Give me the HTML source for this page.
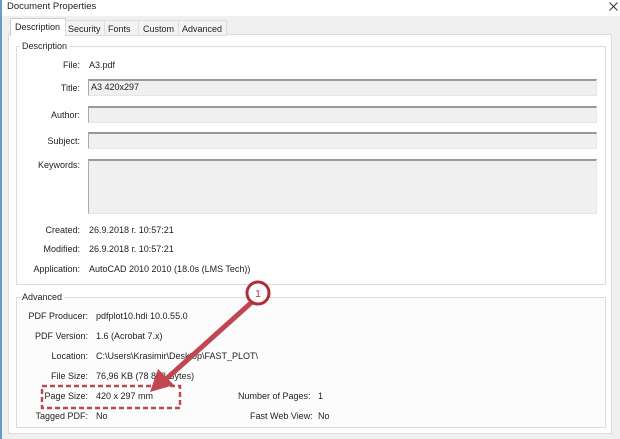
<!DOCTYPE html><html><head><style>
body{margin:0;width:620px;height:439px;background:#f0f0f0;font-family:"Liberation Sans",sans-serif;font-size:9px;color:#222;position:relative;overflow:hidden}
.a{position:absolute;white-space:nowrap}
.r{text-align:right;width:70px}
.box{position:absolute;background:#f0f0f0;border-top:2px solid #999;border-left:1px solid #aaa;border-right:1px solid #e6e6e6;border-bottom:1px solid #e6e6e6;box-sizing:border-box}
</style></head><body>
<div class="a" style="left:0;top:0;width:620px;height:16px;background:#fff"></div>
<div class="a" style="left:0;top:0;width:2px;height:439px;background:#6a9ac8"></div>
<div class="a" style="left:7px;top:1px;font-size:9.5px">Document Properties</div>
<svg class="a" style="left:609px;top:2px" width="9" height="9"><path d="M0.5 0.5L8.5 8.5M8.5 0.5L0.5 8.5" stroke="#333" stroke-width="1"/></svg>
<div class="a" style="left:8px;top:34px;width:604px;height:400px;background:#fff;border:1px solid #ddd;box-sizing:border-box"></div>
<div class="a" style="left:10px;top:18px;width:54px;height:17px;background:#fff;border:1px solid #ccc;border-bottom:none"></div>
<div class="a" style="left:15px;top:22px">Description</div>
<div class="a" style="left:65px;top:20px;width:160px;height:14px;border:1px solid #ddd;background:#f3f3f3"></div>
<div class="a" style="left:68px;top:24px">Security</div>
<div class="a" style="left:104px;top:20px;height:14px;border-left:1px solid #ddd"></div>
<div class="a" style="left:108px;top:24px">Fonts</div>
<div class="a" style="left:138px;top:20px;height:14px;border-left:1px solid #ddd"></div>
<div class="a" style="left:143px;top:24px">Custom</div>
<div class="a" style="left:178px;top:20px;height:14px;border-left:1px solid #ddd"></div>
<div class="a" style="left:182px;top:24px">Advanced</div>
<div class="a" style="left:16px;top:46px;width:588px;height:237px;border:1px solid #dcdcdc"></div>
<div class="a" style="left:20px;top:41px;background:#fff;padding:0 2px">Description</div>
<div class="a r" style="left:10px;top:60px">File:</div><div class="a" style="left:89px;top:60px">A3.pdf</div>
<div class="a r" style="left:10px;top:83px">Title:</div>
<div class="box" style="left:88px;top:79px;width:509px;height:17px"></div><div class="a" style="left:91px;top:82px">A3 420x297</div>
<div class="a r" style="left:10px;top:110px">Author:</div><div class="box" style="left:88px;top:106px;width:509px;height:17px"></div>
<div class="a r" style="left:10px;top:136px">Subject:</div><div class="box" style="left:88px;top:132px;width:509px;height:17px"></div>
<div class="a r" style="left:10px;top:160px">Keywords:</div><div class="box" style="left:88px;top:159px;width:509px;height:55px"></div>
<div class="a r" style="left:10px;top:225px">Created:</div><div class="a" style="left:89px;top:225px">26.9.2018 г. 10:57:21</div>
<div class="a r" style="left:10px;top:244px">Modified:</div><div class="a" style="left:89px;top:244px">26.9.2018 г. 10:57:21</div>
<div class="a r" style="left:10px;top:264px">Application:</div><div class="a" style="left:89px;top:264px">AutoCAD 2010 2010 (18.0s (LMS Tech))</div>
<div class="a" style="left:16px;top:297px;width:588px;height:129px;border:1px solid #dcdcdc;background:#fcfcfc"></div>
<div class="a" style="left:20px;top:292px;background:#fff;padding:0 2px">Advanced</div>
<div class="a r" style="left:18px;top:311px">PDF Producer:</div><div class="a" style="left:96px;top:311px">pdfplot10.hdi 10.0.55.0</div>
<div class="a r" style="left:18px;top:331px">PDF Version:</div><div class="a" style="left:96px;top:331px">1.6 (Acrobat 7.x)</div>
<div class="a r" style="left:18px;top:351px">Location:</div><div class="a" style="left:96px;top:351px">C:\Users\Krasimir\Desktop\FAST_PLOT\</div>
<div class="a r" style="left:18px;top:371px">File Size:</div><div class="a" style="left:96px;top:371px">76,96 KB (78 803 Bytes)</div>
<div class="a r" style="left:18px;top:391px">Page Size:</div><div class="a" style="left:96px;top:391px">420 x 297 mm</div>
<div class="a r" style="left:18px;top:411px">Tagged PDF:</div><div class="a" style="left:96px;top:411px">No</div>
<div class="a" style="left:238px;top:391px">Number of Pages:</div><div class="a" style="left:318px;top:391px">1</div>
<div class="a" style="left:250px;top:411px">Fast Web View:</div><div class="a" style="left:318px;top:411px">No</div>
<svg class="a" style="left:0;top:0" width="620" height="439">
<rect x="42" y="386" width="138" height="22" fill="none" stroke="#c04650" stroke-width="2.5" stroke-dasharray="5,3"/>
<line x1="252" y1="302" x2="165" y2="380" stroke="#c04650" stroke-width="5"/>
<polygon points="150,392 158,369 174,385" fill="#c04650"/>
<circle cx="258" cy="293" r="11" fill="#fff" stroke="#b0303a" stroke-width="3"/>
<text x="258" y="297" font-size="10" fill="#b0303a" text-anchor="middle" font-family="Liberation Sans">1</text>
</svg>
</body></html>
